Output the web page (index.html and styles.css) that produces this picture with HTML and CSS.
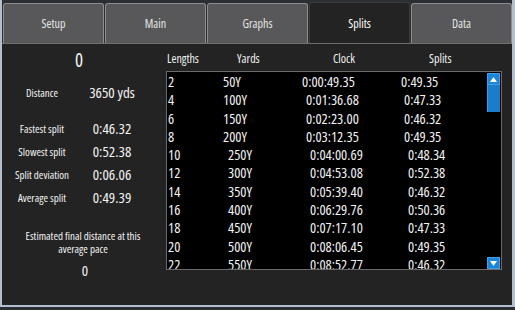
FILE: index.html
```html
<!DOCTYPE html>
<html lang="en">
<head>
  <meta charset="UTF-8">
  <title>Splits</title>
  <link rel="stylesheet" href="styles.css">
</head>
<body>
  <div class="window">
    <nav class="tabs">
      <div class="tab">Setup</div>
      <div class="tab">Main</div>
      <div class="tab">Graphs</div>
      <div class="tab active">Splits</div>
      <div class="tab">Data</div>
    </nav>

    <main class="panel">
      <section class="summary">
        <div class="count">0</div>
        <div class="stat distance"><span class="label">Distance</span><span class="value">3650 yds</span></div>
        <div class="stat first"><span class="label">Fastest split</span><span class="value">0:46.32</span></div>
        <div class="stat"><span class="label">Slowest split</span><span class="value">0:52.38</span></div>
        <div class="stat"><span class="label">Split deviation</span><span class="value">0:06.06</span></div>
        <div class="stat"><span class="label">Average split</span><span class="value">0:49.39</span></div>
        <p class="estimate">Estimated final distance at this average pace</p>
        <div class="estimate-value">0</div>
      </section>

      <section class="splits">
        <div class="head">
          <span>Lengths</span><span>Yards</span><span>Clock</span><span>Splits</span>
        </div>
        <div class="listbox">
          <div class="rows">
            <div class="row"><span>2</span><span>50Y</span><span>0:00:49.35</span><span>0:49.35</span></div>
            <div class="row mid"><span>4</span><span>100Y</span><span>0:01:36.68</span><span>0:47.33</span></div>
            <div class="row mid"><span>6</span><span>150Y</span><span>0:02:23.00</span><span>0:46.32</span></div>
            <div class="row mid"><span>8</span><span>200Y</span><span>0:03:12.35</span><span>0:49.35</span></div>
            <div class="row wide"><span>10</span><span>250Y</span><span>0:04:00.69</span><span>0:48.34</span></div>
            <div class="row wide"><span>12</span><span>300Y</span><span>0:04:53.08</span><span>0:52.38</span></div>
            <div class="row wide"><span>14</span><span>350Y</span><span>0:05:39.40</span><span>0:46.32</span></div>
            <div class="row wide"><span>16</span><span>400Y</span><span>0:06:29.76</span><span>0:50.36</span></div>
            <div class="row wide"><span>18</span><span>450Y</span><span>0:07:17.10</span><span>0:47.33</span></div>
            <div class="row wide"><span>20</span><span>500Y</span><span>0:08:06.45</span><span>0:49.35</span></div>
            <div class="row wide"><span>22</span><span>550Y</span><span>0:08:52.77</span><span>0:46.32</span></div>
          </div>
          <div class="scrollbar">
            <div class="arrow">
              <svg width="7" height="5" viewBox="0 0 7 5"><path d="M0 5 L3.5 0 L7 5 Z" fill="#fff"/></svg>
            </div>
            <div class="thumb"></div>
            <div class="track"></div>
            <div class="arrow">
              <svg width="7" height="5" viewBox="0 0 7 5"><path d="M0 0 L7 0 L3.5 5 Z" fill="#fff"/></svg>
            </div>
          </div>
        </div>
      </section>
    </main>
  </div>
</body>
</html>
```

FILE: styles.css
```css
body {
  margin: 0;
  background: #2b2e33;
  font-family: "Open Sans", "Noto Sans", sans-serif;
  font-stretch: 87.5%;
  color: #f2f2f2;
}

.window {
  height: 307px;
  box-sizing: border-box;
  border: 2px solid #b3bfcc;
  border-top: none;
  border-right-width: 3px;
  background: #2b2e33;
  display: flex;
  flex-direction: column;
}

/* tab strip */
.tabs {
  display: flex;
  gap: 1px;
  padding: 3px 0 0 1px;
  height: 40px;
  box-sizing: content-box;
}

.tab {
  flex: 1;
  display: flex;
  align-items: center;
  justify-content: center;
  background: #58585a;
  border: 1px solid #8d8d8f;
  border-bottom: none;
  border-radius: 3px 3px 0 0;
  font-size: 12px;
  color: #e6e6e6;
}

.tab.active {
  background: #232323;
  border-color: #3a3a3a;
  margin-top: -1px;
  color: #ffffff;
}

/* content */
.panel {
  flex: 1;
  display: flex;
  background: #232323;
  border-top: 1px solid #6f6f6f;
}

.summary {
  width: 160px;
  display: flex;
  flex-direction: column;
}

.count {
  margin-top: 5px;
  font-size: 19px;
  line-height: 22px;
  text-align: center;
  padding-right: 6px;
}

.stat {
  display: grid;
  grid-template-columns: 80px 60px;
  line-height: 23px;
  align-items: center;
}

.stat.distance {
  margin-top: 10px;
}

.stat.first {
  margin-top: 13px;
}

.label {
  font-size: 11px;
  text-align: center;
}

.value {
  font-size: 15px;
  text-align: center;
}

.estimate {
  margin: 21px 0 0;
  padding: 0 14px 0 16px;
  font-size: 11px;
  line-height: 12.5px;
  text-align: center;
}

.estimate-value {
  margin-top: 6px;
  font-size: 15px;
  line-height: 18px;
  text-align: center;
  padding-left: 6px;
}

.splits {
  margin-left: 4px;
  padding-top: 7px;
}

.head {
  display: grid;
  grid-template-columns: 70px 96px 96px 1fr;
  padding-left: 1px;
  font-size: 12px;
  line-height: 16px;
}

.listbox {
  margin-top: 4px;
  width: 336px;
  height: 199px;
  box-sizing: border-box;
  display: flex;
  background: #000;
  border: 1px solid #6a6a6a;
}

.rows {
  flex: 1;
  overflow: hidden;
  padding: 1px 0 0 1px;
  font-size: 14.5px;
  line-height: 18.3px;
}

.row {
  display: grid;
  grid-template-columns: 55px 79px 99px 1fr;
  white-space: nowrap;
}

.row.mid {
  grid-template-columns: 55px 83px 98px 1fr;
}

.row.wide {
  grid-template-columns: 60px 82px 98px 1fr;
}

.scrollbar {
  width: 13px;
  margin: 1px 1px 0 0;
  display: flex;
  flex-direction: column;
}

.arrow {
  height: 12px;
  display: flex;
  align-items: center;
  justify-content: center;
  background: #1b86d8;
  border: 1px solid #3fa0e8;
  box-sizing: border-box;
}

.thumb {
  height: 27px;
  background: #1a7ccc;
  border-left: 1px solid #3a9ae2;
  box-sizing: border-box;
}

.track {
  flex: 1;
}
```
